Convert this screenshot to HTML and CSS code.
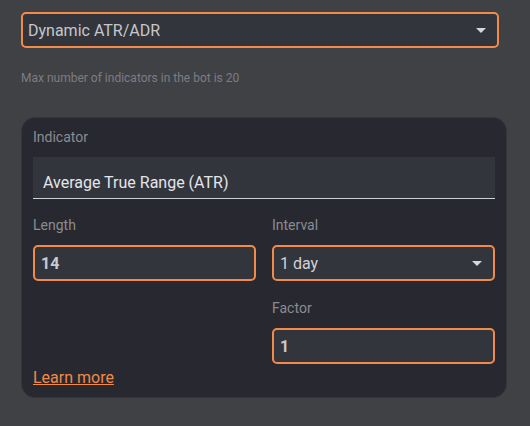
FILE: index.html
```html
<!DOCTYPE html>
<html>
<head>
<meta charset="utf-8">
<link rel="stylesheet" href="styles.css">
</head>
<body>
<div class="page">
  <div class="select top-select">
    <span class="value">Dynamic ATR/ADR</span>
    <span class="caret"></span>
  </div>
  <div class="helper">Max number of indicators in the bot is 20</div>
  <div class="card">
    <div class="label">Indicator</div>
    <div class="filled">Average True Range (ATR)</div>
    <div class="grid">
      <div class="field">
        <div class="label">Length</div>
        <div class="input bold">14</div>
      </div>
      <div class="field">
        <div class="label">Interval</div>
        <div class="input select-in">
          <span>1 day</span>
          <span class="caret"></span>
        </div>
      </div>
      <div class="field"></div>
      <div class="field">
        <div class="label">Factor</div>
        <div class="input bold">1</div>
      </div>
    </div>
    <a class="learn" href="#">Learn more</a>
  </div>
</div>
</body>
</html>
```
FILE: styles.css
```css
html, body {
  margin: 0;
  padding: 0;
  background: #404145;
  font-family: Roboto, "Liberation Sans", sans-serif;
}
.page {
  padding: 12px 0 0 21px;
  width: 486px;
}
.select {
  box-sizing: border-box;
  display: flex;
  align-items: center;
  justify-content: space-between;
}
.top-select {
  width: 478px;
  height: 36px;
  border: 2px solid #f38a48;
  border-radius: 5px;
  background: #33353d;
  padding: 0 11px 0 5px;
  color: #c6c7cb;
  font-size: 16px;
}
.caret {
  width: 0;
  height: 0;
  border-left: 5px solid transparent;
  border-right: 5px solid transparent;
  border-top: 5px solid #d6d7da;
}
.helper {
  margin-top: 22px;
  font-size: 12px;
  line-height: 16px;
  color: #7c7d82;
}
.card {
  margin-top: 31px;
  box-sizing: border-box;
  width: 486px;
  background: #272830;
  border: 1px solid #34353d;
  border-radius: 14px;
  padding: 9px 11px 7px 11px;
}
.label {
  font-size: 14px;
  line-height: 20px;
  color: #8b8c91;
}
.filled {
  margin-top: 10px;
  background: #33353d;
  border-bottom: 1px solid #cfd0d3;
  padding: 14px 10px 3px 10px;
  font-size: 16px;
  line-height: 24px;
  color: #e4e5e8;
}
.grid {
  display: grid;
  grid-template-columns: 223px 223px;
  column-gap: 16px;
  row-gap: 17px;
  margin-top: 16px;
}
.field .label {
  margin-bottom: 10px;
}
.input {
  box-sizing: border-box;
  height: 36px;
  border: 2px solid #f38a48;
  border-radius: 5px;
  background: #33353d;
  padding: 0 6px;
  display: flex;
  align-items: center;
  font-size: 16px;
  color: #c9cacf;
}
.bold {
  font-weight: 700;
}
.select-in {
  justify-content: space-between;
  padding-right: 11px;
  color: #d0d1d5;
}
.learn {
  display: inline-block;
  margin-top: 2px;
  font-size: 16px;
  line-height: 24px;
  color: #f38a48;
  text-decoration: underline;
}
```
